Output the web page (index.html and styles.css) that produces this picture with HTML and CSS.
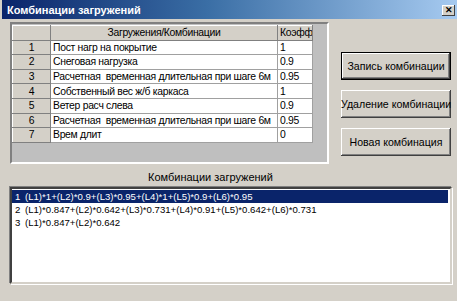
FILE: index.html
```html
<!DOCTYPE html>
<html lang="ru">
<head>
    <meta charset="UTF-8">
    <title>Комбинации загружений</title>
    <link rel="stylesheet" href="styles.css">
</head>
<body>

<div class="window">
    <div class="titlebar">
        <span class="title">Комбинации загружений</span>
        <span class="close">&#x2715;</span>
    </div>

    <div class="content">
        <div class="grid">
            <table class="loads">
                <thead>
                    <tr>
                        <th class="num"></th>
                        <th class="name">Загружения/Комбинации</th>
                        <th class="coef">Коэфф</th>
                    </tr>
                </thead>
                <tbody>
                    <tr><th class="num">1</th><td>Пост нагр на покрытие</td><td>1</td></tr>
                    <tr><th class="num">2</th><td>Снеговая нагрузка</td><td>0.9</td></tr>
                    <tr><th class="num">3</th><td>Расчетная&nbsp; временная длительная при шаге 6м</td><td>0.95</td></tr>
                    <tr><th class="num">4</th><td>Собственный вес ж/б каркаса</td><td>1</td></tr>
                    <tr><th class="num">5</th><td>Ветер расч слева</td><td>0.9</td></tr>
                    <tr><th class="num">6</th><td>Расчетная&nbsp; временная длительная при шаге 6м</td><td>0.95</td></tr>
                    <tr><th class="num">7</th><td>Врем длит</td><td>0</td></tr>
                </tbody>
            </table>
        </div>

        <div class="actions">
            <button class="btn default">Запись комбинации</button>
            <button class="btn">Удаление комбинации</button>
            <button class="btn">Новая комбинация</button>
        </div>
    </div>

    <div class="list-label">Комбинации загружений</div>
    <ul class="listbox">
        <li class="selected"><span class="idx">1</span>(L1)*1+(L2)*0.9+(L3)*0.95+(L4)*1+(L5)*0.9+(L6)*0.95</li>
        <li><span class="idx">2</span>(L1)*0.847+(L2)*0.642+(L3)*0.731+(L4)*0.91+(L5)*0.642+(L6)*0.731</li>
        <li><span class="idx">3</span>(L1)*0.847+(L2)*0.642</li>
    </ul>
</div>

</body>
</html>
```

FILE: styles.css
```css
body {
    margin: 0;
    background-color: #d4d0c8;
    font-family: "Liberation Sans", Arial, sans-serif;
    font-size: 10.4px;
    color: #000;
}
.window {
    height: 301px;
    padding-left: 2px;
    box-sizing: border-box;
}
.titlebar {
    height: 19px;
    display: flex;
    align-items: center;
    justify-content: space-between;
    padding: 0 2px 0 5px;
    background: linear-gradient(to right, #0a246a, #3a6ea5 45%, #a6caf0);
}
.title {
    color: #fff;
    font-weight: bold;
    font-size: 11px;
}
.close {
    width: 13px;
    height: 11px;
    margin-top: 1px;
    background-color: #d4d0c8;
    box-shadow: inset -1px -1px #404040, inset 1px 1px #fff;
    font-size: 9px;
    font-weight: bold;
    line-height: 11px;
    text-align: center;
}
.content {
    display: flex;
    padding: 3px 0 0 8px;
}
.grid {
    width: 319px;
    height: 142px;
    box-sizing: border-box;
    background-color: #bfbfbf;
    border: 2px solid;
    border-color: #808080 #fff #fff #808080;
    padding-top: 1px;
}
.loads {
    border-collapse: collapse;
    table-layout: fixed;
    width: 301px;
    letter-spacing: -0.3px;
}
.loads th, .loads td {
    height: 13.6px;
    padding: 0 2px;
    border: 1px solid #a0a0a0;
    line-height: 13px;
    white-space: nowrap;
    overflow: hidden;
    font-weight: normal;
}
.loads td {
    background-color: #fff;
    text-align: left;
}
.loads th {
    background-color: #d4d0c8;
    border-color: #fff #808080 #808080 #fff;
}
.loads th.num {
    width: 33px;
    text-align: center;
}
.loads th.name {
    width: 222px;
    text-align: center;
}
.loads th.coef {
    text-align: left;
}
.actions {
    display: flex;
    flex-direction: column;
    gap: 10px;
    margin-left: 12px;
    padding-top: 30px;
}
.btn {
    width: 110px;
    height: 28px;
    padding: 0;
    font-family: "Liberation Sans", Arial, sans-serif;
    font-size: 10.6px;
    color: #000;
    background-color: #d4d0c8;
    border: none;
    box-shadow: inset -1px -1px #404040, inset 1px 1px #fff, inset -2px -2px #808080;
    white-space: nowrap;
}
.btn.default {
    box-shadow: inset 0 0 0 1px #000, inset -2px -2px #404040, inset 2px 2px #fff, inset -3px -3px #808080;
}
.list-label {
    margin-top: 6px;
    padding-left: 146px;
    line-height: 14px;
    font-size: 11px;
}
.listbox {
    list-style: none;
    margin: 3px 0 0 8px;
    padding: 1px 2px 0 0;
    width: 442px;
    height: 97px;
    box-sizing: border-box;
    background-color: #fff;
    border: 2px solid;
    border-color: #404040 #d4d0c8 #d4d0c8 #404040;
    box-shadow: -1px -1px #808080, 1px 1px #fff;
    font-size: 9.6px;
}
.listbox li {
    height: 13px;
    line-height: 13px;
    padding-left: 3px;
    white-space: nowrap;
}
.listbox li.selected {
    background-color: #0a246a;
    color: #fff;
}
.idx {
    display: inline-block;
    width: 10px;
}
```
